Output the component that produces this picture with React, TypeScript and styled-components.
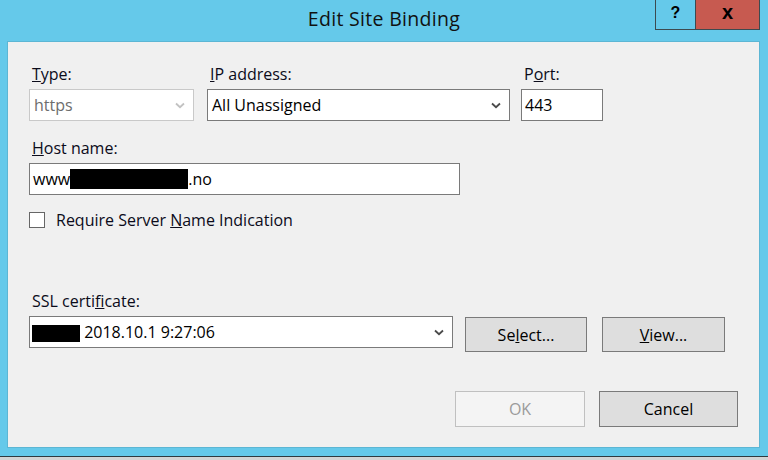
import React from "react";
import styled, { createGlobalStyle } from "styled-components";

const Global = createGlobalStyle`
  html, body { margin: 0; padding: 0; background: #65c9ea; }
  body { font-family: "Open Sans", "Noto Sans", "Liberation Sans", sans-serif; color: #000; }
  * { box-sizing: border-box; }
`;

const Window = styled.div`
  width: 768px;
  height: 460px;
  background: #65c9ea;
  display: flex;
  flex-direction: column;
  overflow: hidden;
`;

const TitleBar = styled.div`
  height: 42px;
  display: grid;
  grid-template-columns: 1fr auto 1fr;
  flex-shrink: 0;
`;

const Title = styled.div`
  grid-column: 2;
  font-size: 19.5px;
  line-height: 22px;
  padding-top: 8px;
  color: #111;
  letter-spacing: 0.3px;
`;

const Caption = styled.div`
  grid-column: 3;
  justify-self: end;
  align-self: start;
  margin-right: 8px;
  display: flex;
  height: 30px;
  border: 1px solid #3c4a50;
  border-top: none;
`;

const CapButton = styled.div<{ $w: number; $bg: string; $size: number }>`
  width: ${(p) => p.$w}px;
  height: 29px;
  background: ${(p) => p.$bg};
  display: flex;
  align-items: center;
  justify-content: center;
  font-family: "Liberation Sans", "DejaVu Sans", sans-serif;
  font-weight: bold;
  font-size: ${(p) => p.$size}px;
  color: #000;
  padding-bottom: 4px;
  & + & { border-left: 1px solid #3c4a50; }
`;

const Client = styled.div`
  margin: 0 9px 0 8px;
  height: 405px;
  flex-shrink: 0;
  background: #f0f0f0;
  box-shadow: 0 0 0 1px #5cb6d4;
  padding: 22px 21px 20px 21px;
  display: flex;
  flex-direction: column;
  font-size: 16px;
`;

const Row = styled.div<{ $mt?: number; $gap?: number; $end?: boolean }>`
  display: flex;
  align-items: flex-start;
  margin-top: ${(p) => p.$mt ?? 0}px;
  gap: ${(p) => p.$gap ?? 0}px;
  justify-content: ${(p) => (p.$end ? "flex-end" : "flex-start")};
`;

const Field = styled.div<{ $w: number; $ml?: number }>`
  width: ${(p) => p.$w}px;
  margin-left: ${(p) => p.$ml ?? 0}px;
  display: flex;
  flex-direction: column;
`;

const Label = styled.div`
  line-height: 20px;
  height: 20px;
  margin-bottom: 5px;
  color: #0b0b1a;
  white-space: nowrap;
  padding-left: 3px;
`;

const Combo = styled.div<{ $disabled?: boolean }>`
  height: 32px;
  background: #fff;
  border: 1px solid ${(p) => (p.$disabled ? "#c9c9c9" : "#7a7a7a")};
  display: flex;
  align-items: center;
  justify-content: space-between;
  padding: 0 8px 0 4px;
  color: ${(p) => (p.$disabled ? "#6d6d6d" : "#000")};
  white-space: nowrap;
`;

const TextBox = styled.div`
  height: 32px;
  background: #fff;
  border: 1px solid #7a7a7a;
  display: flex;
  align-items: center;
  padding: 0 3px;
  white-space: nowrap;
`;

const Redacted = styled.span<{ $w: number; $h: number; $ml?: number }>`
  display: inline-block;
  width: ${(p) => p.$w}px;
  height: ${(p) => p.$h}px;
  margin-left: ${(p) => p.$ml ?? 0}px;
  background: #000;
  vertical-align: middle;
`;

const CheckRow = styled.label`
  display: flex;
  align-items: center;
  gap: 11px;
  margin-top: 15px;
  line-height: 20px;
  color: #0b0b1a;
`;

const CheckBox = styled.span`
  width: 16px;
  height: 16px;
  background: #fff;
  border: 1px solid #666;
`;

const Button = styled.div<{ $w: number; $disabled?: boolean; $h?: number; $mt?: number; $ml?: number }>`
  width: ${(p) => p.$w}px;
  height: ${(p) => p.$h ?? 36}px;
  margin-top: ${(p) => p.$mt ?? 0}px;
  margin-left: ${(p) => p.$ml ?? 0}px;
  background: ${(p) => (p.$disabled ? "#f4f4f4" : "#dedede")};
  border: 1px solid ${(p) => (p.$disabled ? "#c0c0c0" : "#7a7a7a")};
  color: ${(p) => (p.$disabled ? "#9b9b9b" : "#000")};
  display: flex;
  align-items: center;
  justify-content: center;
  line-height: 20px;
`;

const BottomEdge = styled.div`
  margin-top: 9px;
  height: 1px;
  background: #2e3a40;
  flex-shrink: 0;
`;

const Below = styled.div`
  flex: 1;
  background: #d4d4d4;
`;

const Chevron = ({ color }: { color: string }) => (
  <svg width="10" height="7" viewBox="0 0 10 7">
    <path d="M1 1.5 L5 5.2 L9 1.5" fill="none" stroke={color} strokeWidth="1.8" />
  </svg>
);

export default function App() {
  return (
    <Window>
      <Global />
      <TitleBar>
        <Title>Edit Site Binding</Title>
        <Caption>
          <CapButton $w={39} $bg="#65c9ea" $size={16}>?</CapButton>
          <CapButton $w={64} $bg="#c75a50" $size={20}>x</CapButton>
        </Caption>
      </TitleBar>
      <Client>
        <Row>
          <Field $w={165}>
            <Label>
              <u>T</u>ype:
            </Label>
            <Combo $disabled>
              https
              <Chevron color="#c2c2c2" />
            </Combo>
          </Field>
          <Field $w={303} $ml={13}>
            <Label>
              <u>I</u>P address:
            </Label>
            <Combo>
              All Unassigned
              <Chevron color="#4a4a4a" />
            </Combo>
          </Field>
          <Field $w={82} $ml={11}>
            <Label>
              P<u>o</u>rt:
            </Label>
            <TextBox>443</TextBox>
          </Field>
        </Row>
        <Row $mt={17}>
          <Field $w={431}>
            <Label>
              <u>H</u>ost name:
            </Label>
            <TextBox>
              www<Redacted $w={118} $h={20} />.no
            </TextBox>
          </Field>
        </Row>
        <CheckRow>
          <CheckBox />
          <span>
            Require Server <u>N</u>ame Indication
          </span>
        </CheckRow>
        <Row $mt={61}>
          <Field $w={424}>
            <Label>
              SSL certi<u>f</u>icate:
            </Label>
            <Combo>
              <span>
                <Redacted $w={48} $h={17} $ml={-2} /> 2018.10.1 9:27:06
              </span>
              <Chevron color="#4a4a4a" />
            </Combo>
          </Field>
          <Button $w={122} $h={35} $mt={26} $ml={12}>
            Se<u>l</u>ect...
          </Button>
          <Button $w={123} $h={35} $mt={26} $ml={15}>
            <u>V</u>iew...
          </Button>
        </Row>
        <Row $mt={39} $gap={14} $end>
          <Button $w={130} $disabled>
            OK
          </Button>
          <Button $w={139}>Cancel</Button>
        </Row>
      </Client>
      <BottomEdge />
      <Below />
    </Window>
  );
}
